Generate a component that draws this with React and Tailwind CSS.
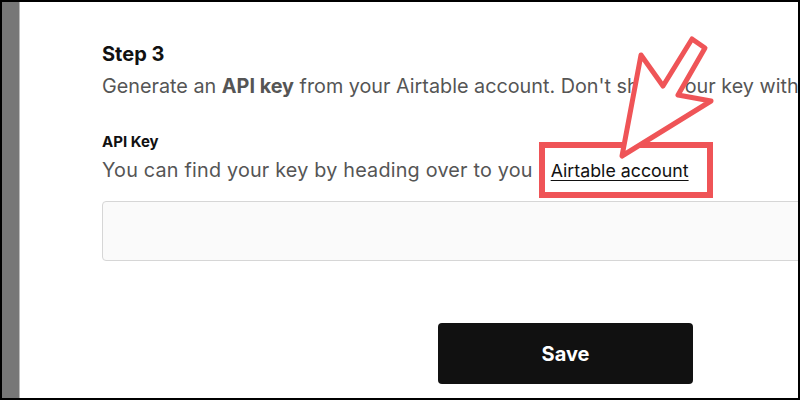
import React from 'react'

const font = { fontFamily: 'Inter, "Noto Sans", sans-serif' }

// annotation overlay: red callout box + arrow pointing at the link
function Callout() {
  return (
    <svg
      className="absolute left-[-2px] top-[-2px] w-[800px] h-[400px] pointer-events-none"
      viewBox="0 0 800 400"
      fill="none"
    >
      <rect x="542" y="145" width="168" height="50" stroke="#ef5457" strokeWidth="6" />
      <polygon
        points="622,156 641,55 663,86 692,39 705,48 678,95 711,101"
        fill="#fff"
        stroke="#ef5457"
        strokeWidth="5"
        strokeLinejoin="round"
      />
    </svg>
  )
}

export default function App() {
  return (
    <div className="relative w-[800px] h-[400px] border-2 border-black bg-white flex overflow-hidden" style={font}>
      <div className="w-[18px] flex-none bg-[#777] border-r border-[#bbb]" />
      <div className="flex-1 overflow-hidden">
        <div className="ml-[82px] w-[927px] pt-[40px]">
          <h2 className="text-[20px] leading-[24px] font-bold text-[#111]">Step 3</h2>
          <p className="mt-[8px] text-[19.8px] leading-[24px] text-[#555] whitespace-nowrap">
            Generate an <b className="font-bold">API key</b> from your Airtable account. Don't share your key with anyone.
          </p>

          <label className="block mt-[34px] text-[15px] leading-[20px] font-bold text-[#111]">API Key</label>
          <p className="mt-[6px] text-[19.8px] leading-[24px] text-[#555] whitespace-nowrap tracking-[0.2px]">
            You can find your key by heading over to you
            <a className="ml-[18px] text-[17.8px] tracking-normal text-[#111] underline underline-offset-[3px]">Airtable account</a>
          </p>

          <input
            className="mt-[18px] block w-full h-[60px] rounded-[4px] border border-[#d6d6d6] bg-[#fafafa] outline-none"
            type="text"
          />

          <button className="mt-[62px] mx-auto flex items-center justify-center w-[255px] h-[61px] rounded-[4px] bg-[#111] text-white text-[20px] font-bold">
            Save
          </button>
        </div>
      </div>
      <Callout />
    </div>
  )
}
